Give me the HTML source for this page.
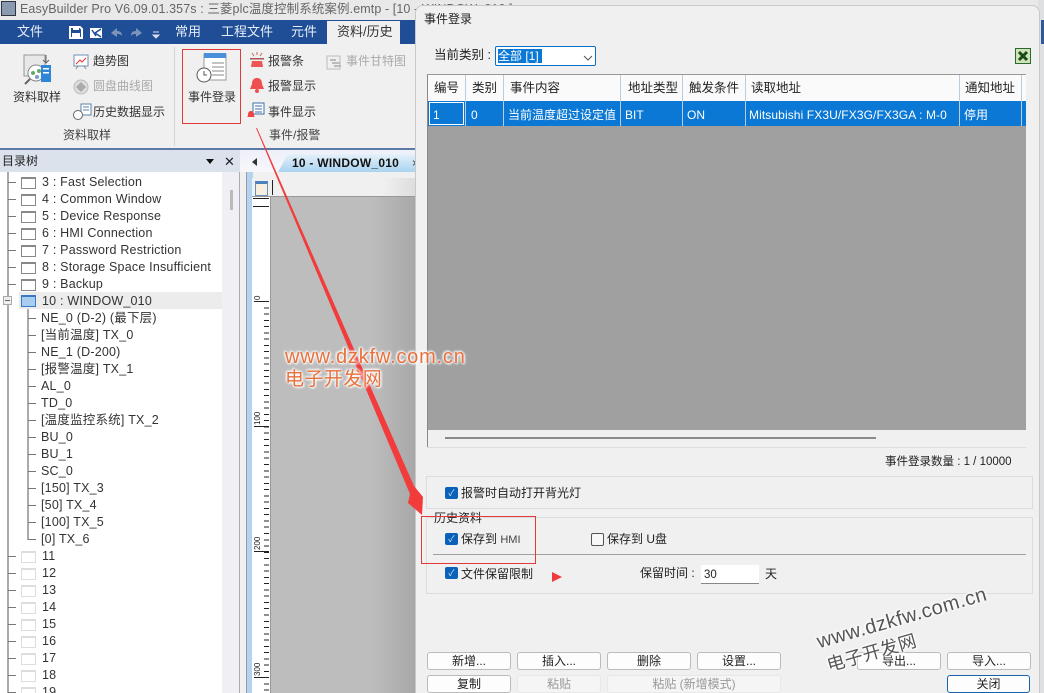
<!DOCTYPE html>
<html><head><meta charset="utf-8"><style>
html,body{margin:0;padding:0;width:1044px;height:693px;overflow:hidden}
body{position:relative;background:#f0f0f0;font-family:"Liberation Sans","Noto Sans CJK SC",sans-serif;font-size:12px;color:#222}
div,span{position:absolute;white-space:nowrap}
svg{position:absolute;left:0;top:0}
.m{color:#e8eef8;font-size:13px;top:24px;line-height:16px}
.r{font-size:12px;color:#333;line-height:14px}
.t{font-size:12.5px;letter-spacing:.2px;color:#333;left:42px;line-height:14px}
.s{left:41px}
.w{left:21px;width:13px;height:9px;border:1px solid #888;border-top-width:2px;background:#fff}
.e{left:21px;width:13px;height:9px;border:1px solid #ddd;border-top-width:2px;background:#fff}
.d{left:8px;width:8px;height:1px;background:#777}
.ds{left:28px;width:8px;height:1px;background:#777}
.h{top:81px;font-size:12.5px;color:#222;line-height:14px}
.c{top:108px;font-size:12px;color:#fff;line-height:14px}
.v{top:75px;width:1px;height:51px;background:#bcd}
.b{height:16px;line-height:16px;width:82px;border:1px solid #bbb;border-radius:3px;background:#fdfdfd;text-align:center;font-size:12px;color:#222}
.b.x{background:#f5f5f5;border-color:#e8e8e8;color:#999}
.k{width:13px;height:12px;background:#0a62b8;border-radius:2px;color:#cfe4fa;font-size:9px;line-height:12px;text-align:center}
.l{font-size:12px;line-height:14px}
.big{left:254px;width:15px;height:1px;background:#222}
.n{left:253px;font-size:8px;transform:rotate(-90deg);transform-origin:0 0;color:#222}
</style></head><body>
<div style="left:0;top:0;width:1044px;height:20px;background:#e9e9e9"></div>
<div style="left:1px;top:1px;width:13px;height:13px;background:#8a9ab0;border:1px solid #334"></div>
<div style="left:20px;top:2px;font-size:12.5px;line-height:14px;color:#666;letter-spacing:.1px">EasyBuilder Pro V6.09.01.357s : 三菱plc温度控制系统案例.emtp - [10 - WINDOW_010 ]</div>
<div style="left:0;top:20px;width:1044px;height:24px;background:#1f4e96"></div>
<div class="m" style="left:17px">文件</div>
<svg width="110" height="24" style="left:60px;top:20px"><path d="M10 7h10l2 2v9H10z" fill="none" stroke="#fff" stroke-width="2"/><rect x="13" y="7" width="6" height="3" fill="#fff"/><rect x="12" y="13" width="8" height="5" fill="#fff"/><rect x="30" y="8" width="12" height="10" fill="#fff"/><path d="M41 9l-6 4 6 4M32 10l4 6" stroke="#1f4e96" stroke-width="1.5" fill="none"/><path d="M51 13l6-5v3c4 0 5 2 5 5-1-2-3-2-5-2v3z" fill="#7d94b8"/><path d="M82 13l-6-5v3c-4 0-5 2-5 5 1-2 3-2 5-2v3z" fill="#7d94b8"/><path d="M93 12h6M93 15l3 3 3-3z" stroke="#dde" fill="#dde"/></svg>
<div class="m" style="left:175px">常用</div>
<div class="m" style="left:221px">工程文件</div>
<div class="m" style="left:291px">元件</div>
<div style="left:327px;top:21px;width:73px;height:23px;background:#f0f0f0"></div>
<div class="m" style="left:337px;color:#333">资料/历史</div>

<div style="left:0;top:44px;width:415px;height:104px;background:#f0f0f0"></div>
<div style="left:174px;top:47px;width:1px;height:99px;background:#d4d4d4"></div>
<div style="left:0;top:148px;width:415px;height:2px;background:#5c7aa8"></div>
<div style="left:0;top:150px;width:240px;height:22px;background:#dbe2ec"></div>
<div style="left:240px;top:150px;width:175px;height:22px;background:linear-gradient(#eef0fa,#f7f7fb)"></div>
<div style="left:2px;top:154px;font-size:12px;line-height:14px;color:#222">目录树</div>
<div style="left:206px;top:159px;border:4px solid transparent;border-top:5px solid #111;border-bottom:0"></div>
<div style="left:224px;top:155px;font-size:13px;color:#222;line-height:13px">✕</div>

<svg width="415" height="148" style="left:0;top:0">
<rect x="24" y="55" width="21" height="21" fill="#e8e8e8" stroke="#999"/><circle cx="36" cy="73" r="8" fill="#fff" stroke="#888"/><circle cx="33" cy="73" r="2" fill="#6a6"/><circle cx="39" cy="71" r="2" fill="#6a6"/><circle cx="37" cy="77" r="2" fill="#79c"/><line x1="30" y1="79" x2="25" y2="84" stroke="#666" stroke-width="2"/><rect x="41" y="65" width="10" height="17" fill="#2f86d6"/><rect x="43" y="68" width="6" height="1.5" fill="#fff"/><rect x="43" y="72" width="6" height="1.5" fill="#fff"/><path d="M46 55v7M43 60l3 3 3-3" stroke="#666" fill="none"/>
<rect x="74" y="55" width="14" height="11" fill="#fff" stroke="#6b8fb5"/><path d="M76 64l4-4 2 2 4-4" stroke="#e33" fill="none"/><path d="M78 66l-2 3M84 66l2 3" stroke="#888"/>
<circle cx="81" cy="87" r="7" fill="#ddd" stroke="#bbb"/><path d="M81 82l5 5-5 5-5-5z" fill="#aaa"/>
<rect x="81" y="104" width="10" height="11" fill="#fff" stroke="#5b7fa5"/><path d="M83 107h6M83 110h6" stroke="#5b7fa5"/><circle cx="78" cy="115" r="4.5" fill="#fff" stroke="#666"/>
<rect x="204" y="54" width="22" height="26" fill="#fff" stroke="#999"/><rect x="204" y="53" width="22" height="5" fill="#4a90d9"/><path d="M212 63h12M212 67h12M212 71h12M212 75h12" stroke="#888"/><circle cx="204" cy="75" r="7" fill="#fff" stroke="#555"/><path d="M204 71v4h3" stroke="#555" fill="none"/>
<path d="M252 61h10l1 6h-12z" fill="#e55"/><rect x="250" y="58" width="14" height="1.5" fill="#a55"/><path d="M252 53l2 3M262 53l-2 3M257 52v3" stroke="#c66"/>
<path d="M256 78c-4 0-5 3-5 6l-2 5h14l-2-5c0-3-1-6-5-6z" fill="#ee4f4f" transform="translate(1 0)"/><circle cx="257" cy="91" r="2" fill="#ee4f4f"/>
<rect x="253" y="103" width="11" height="11" fill="#fff" stroke="#3b6fa5"/><path d="M255 106h7M255 109h7M255 112h7" stroke="#3b6fa5"/><path d="M251 111c-3 0-3 3-3 5l-1 1h8l-1-1c0-2 0-5-3-5z" fill="#e44"/>
<rect x="327" y="56" width="13" height="13" fill="none" stroke="#bbb"/><rect x="330" y="59" width="6" height="2" fill="#bbb"/><rect x="332" y="62" width="8" height="2" fill="#bbb"/><rect x="334" y="65" width="7" height="2" fill="#bbb"/>
</svg>
<div class="r" style="left:13px;top:90px">资料取样</div>
<div class="r" style="left:93px;top:54px">趋势图</div>
<div class="r" style="left:93px;top:79px;color:#aaa">圆盘曲线图</div>
<div class="r" style="left:93px;top:105px">历史数据显示</div>
<div class="r" style="left:63px;top:128px;color:#444">资料取样</div>
<div class="r" style="left:188px;top:90px">事件登录</div>
<div class="r" style="left:268px;top:54px">报警条</div>
<div class="r" style="left:268px;top:79px">报警显示</div>
<div class="r" style="left:268px;top:105px">事件显示</div>
<div class="r" style="left:346px;top:54px;color:#aaa">事件甘特图</div>
<div class="r" style="left:269px;top:128px;color:#444">事件/报警</div>
<div style="left:182px;top:49px;width:57px;height:73px;border:1px solid #e23a3a"></div>

<!-- tab strip -->
<div style="left:252px;top:158px;border:4px solid transparent;border-right:5px solid #333;border-left:0"></div>
<div style="left:278px;top:154px;width:137px;height:18px;background:linear-gradient(#e6f1fa,#a9d3f0);clip-path:polygon(10px 0,100% 0,100% 100%,0 100%)"></div>
<div style="left:292px;top:156px;font-size:12px;line-height:14px;font-weight:bold;color:#111;letter-spacing:.25px">10 - WINDOW_010</div>
<div style="left:412px;top:156px;font-size:12px;color:#333">×</div>

<!-- tree -->
<div style="left:0;top:172px;width:222px;height:521px;background:#fff"></div>
<div style="left:222px;top:172px;width:17px;height:521px;background:#f0f0f4"></div>
<div style="left:230px;top:190px;width:3px;height:20px;background:#bbb"></div>
<div style="left:239px;top:172px;width:1px;height:521px;background:#aab"></div>
<div style="left:246px;top:172px;width:6px;height:521px;background:#b3d3ef;border-left:1px solid #99a"></div>
<div style="left:252px;top:178px;width:163px;height:18px;background:linear-gradient(90deg,#f0f0f0,#f0f0f0 80%,#ddd)"></div>
<div style="left:252px;top:196px;width:18px;height:497px;background:#fff;border-right:1px solid #999"></div>
<div style="left:252px;top:196px;width:163px;height:1px;background:#999"></div>
<div style="left:271px;top:197px;width:144px;height:496px;background:linear-gradient(90deg,#bdbdbd,#bdbdbd 70%,#a8a8a8)"></div>
<div style="left:255px;top:181px;width:11px;height:11px;background:#f6efe0;border:1px solid #6a90c0;border-top:3px solid #4a80c0"></div>
<div style="left:272px;top:180px;width:1px;height:15px;background:#222"></div>
<div style="left:253px;top:198px;width:16px;height:1px;background:#222"></div>
<div style="left:253px;top:206px;width:16px;height:1px;background:#222"></div>
<div style="left:264px;top:301px;width:5px;height:392px;background:repeating-linear-gradient(#222 0,#222 1px,transparent 1px,transparent 6.27px)"></div>
<div class="big" style="top:301px"></div><div class="big" style="top:426px"></div><div class="big" style="top:551px"></div><div class="big" style="top:677px"></div>
<div class="n" style="top:300px">0</div><div class="n" style="top:425px">100</div><div class="n" style="top:550px">200</div><div class="n" style="top:676px">300</div>

<div style="left:7px;top:172px;width:2px;height:521px;background:#aaa"></div>
<div style="left:27px;top:308px;width:2px;height:232px;background:#aaa"></div>
<div style="left:19px;top:292px;width:203px;height:17px;background:#ececec"></div>
<div style="left:3px;top:296px;width:7px;height:7px;border:1px solid #aaa;background:#eee"></div>
<div style="left:5px;top:300px;width:5px;height:1px;background:#666"></div>

<div class="d" style="top:182px"></div><div class="w" style="top:177px"></div><div class="t" style="top:175px">3 : Fast Selection</div>
<div class="d" style="top:199px"></div><div class="w" style="top:194px"></div><div class="t" style="top:192px">4 : Common Window</div>
<div class="d" style="top:216px"></div><div class="w" style="top:211px"></div><div class="t" style="top:209px">5 : Device Response</div>
<div class="d" style="top:233px"></div><div class="w" style="top:228px"></div><div class="t" style="top:226px">6 : HMI Connection</div>
<div class="d" style="top:250px"></div><div class="w" style="top:245px"></div><div class="t" style="top:243px">7 : Password Restriction</div>
<div class="d" style="top:267px"></div><div class="w" style="top:262px"></div><div class="t" style="top:260px">8 : Storage Space Insufficient</div>
<div class="d" style="top:284px"></div><div class="w" style="top:279px"></div><div class="t" style="top:277px">9 : Backup</div>
<div class="w" style="top:295px;border-color:#3a78c0;background:#a9cdf0"></div><div class="t" style="top:294px">10 : WINDOW_010</div>
<div class="ds" style="top:318px"></div><div class="t s" style="top:311px">NE_0 (D-2) (最下层)</div>
<div class="ds" style="top:335px"></div><div class="t s" style="top:328px">[当前温度] TX_0</div>
<div class="ds" style="top:352px"></div><div class="t s" style="top:345px">NE_1 (D-200)</div>
<div class="ds" style="top:369px"></div><div class="t s" style="top:362px">[报警温度] TX_1</div>
<div class="ds" style="top:386px"></div><div class="t s" style="top:379px">AL_0</div>
<div class="ds" style="top:403px"></div><div class="t s" style="top:396px">TD_0</div>
<div class="ds" style="top:420px"></div><div class="t s" style="top:413px">[温度监控系统] TX_2</div>
<div class="ds" style="top:437px"></div><div class="t s" style="top:430px">BU_0</div>
<div class="ds" style="top:454px"></div><div class="t s" style="top:447px">BU_1</div>
<div class="ds" style="top:471px"></div><div class="t s" style="top:464px">SC_0</div>
<div class="ds" style="top:488px"></div><div class="t s" style="top:481px">[150] TX_3</div>
<div class="ds" style="top:505px"></div><div class="t s" style="top:498px">[50] TX_4</div>
<div class="ds" style="top:522px"></div><div class="t s" style="top:515px">[100] TX_5</div>
<div class="ds" style="top:539px"></div><div class="t s" style="top:532px">[0] TX_6</div>
<div class="d" style="top:556px"></div><div class="e" style="top:551px"></div><div class="t" style="top:549px">11</div>
<div class="d" style="top:573px"></div><div class="e" style="top:568px"></div><div class="t" style="top:566px">12</div>
<div class="d" style="top:590px"></div><div class="e" style="top:585px"></div><div class="t" style="top:583px">13</div>
<div class="d" style="top:607px"></div><div class="e" style="top:602px"></div><div class="t" style="top:600px">14</div>
<div class="d" style="top:624px"></div><div class="e" style="top:619px"></div><div class="t" style="top:617px">15</div>
<div class="d" style="top:641px"></div><div class="e" style="top:636px"></div><div class="t" style="top:634px">16</div>
<div class="d" style="top:658px"></div><div class="e" style="top:653px"></div><div class="t" style="top:651px">17</div>
<div class="d" style="top:675px"></div><div class="e" style="top:670px"></div><div class="t" style="top:668px">18</div>
<div class="d" style="top:692px"></div><div class="e" style="top:687px"></div><div class="t" style="top:685px">19</div>

<!-- right backdrop -->
<div style="left:1038px;top:0;width:6px;height:693px;background:#dfe0e2"></div>
<div style="left:1041px;top:20px;width:3px;height:24px;background:#2f5a9a"></div>

<!-- dialog -->
<div style="left:415px;top:5px;width:625px;height:690px;background:#f0f0f1;border:1px solid #c8c8c8;border-radius:8px 8px 0 0;box-sizing:border-box"></div>
<div style="left:424px;top:12px;font-size:12px;line-height:14px;color:#222">事件登录</div>
<div style="left:434px;top:48px;font-size:12.5px;line-height:14px;color:#222">当前类别 :</div>
<div style="left:495px;top:46px;width:101px;height:20px;background:#fff;border:1px solid #0a70c8;border-radius:2px;box-sizing:border-box"></div>
<div style="left:498px;top:49px;width:44px;height:14px;background:#0a78d4;color:#fff;font-size:12px;line-height:14px">全部 [1]</div>
<svg width="10" height="6" style="left:583px;top:55px"><path d="M1 1l4 4 4-4" fill="none" stroke="#555"/></svg>
<svg width="17" height="17" style="left:1015px;top:48px"><rect x="0.5" y="0.5" width="15" height="15" fill="#cfe3b8" stroke="#2a6a2a"/><path d="M4 4l8 8M12 4l-8 8" stroke="#1a4a1a" stroke-width="3"/></svg>

<div style="left:427px;top:74px;width:599px;height:373px;background:#a0a0a0;border-left:1px solid #888;box-sizing:border-box"></div>
<div style="left:428px;top:75px;width:598px;height:26px;background:#fafafa"></div>
<div style="left:428px;top:101px;width:598px;height:25px;background:#0a78d4"></div>
<div style="left:427px;top:74px;width:599px;height:1px;background:#999"></div>
<div style="left:429px;top:102px;width:35px;height:23px;border:1px solid #fff;box-sizing:border-box"></div>
<div class="v" style="left:465px"></div><div class="v" style="left:503px"></div><div class="v" style="left:620px"></div><div class="v" style="left:682px"></div><div class="v" style="left:745px"></div><div class="v" style="left:959px"></div><div class="v" style="left:1021px"></div>
<div class="h" style="left:434px">编号</div><div class="h" style="left:472px">类别</div><div class="h" style="left:510px">事件内容</div><div class="h" style="left:628px">地址类型</div><div class="h" style="left:689px">触发条件</div><div class="h" style="left:751px">读取地址</div><div class="h" style="left:965px">通知地址</div>
<div class="c" style="left:433px">1</div><div class="c" style="left:471px">0</div><div class="c" style="left:508px">当前温度超过设定值</div><div class="c" style="left:625px">BIT</div><div class="c" style="left:687px">ON</div><div class="c" style="left:749px;letter-spacing:.1px">Mitsubishi FX3U/FX3G/FX3GA : M-0</div><div class="c" style="left:964px">停用</div>
<div style="left:428px;top:430px;width:598px;height:17px;background:#f0f0f1"></div>
<div style="left:445px;top:437px;width:431px;height:2px;background:#8a8a8a"></div>
<div style="left:427px;top:447px;width:599px;height:1px;background:#ddd"></div>

<div style="left:885px;top:455px;font-size:11.5px;line-height:14px;color:#222">事件登录数量 : 1 / 10000</div>
<div style="left:426px;top:476px;width:605px;height:31px;border:1px solid #dcdcdc"></div>
<div class="k" style="left:445px;top:487px">✓</div>
<div class="l" style="left:461px;top:486px">报警时自动打开背光灯</div>
<div style="left:426px;top:517px;width:605px;height:75px;border:1px solid #dcdcdc"></div>
<div class="l" style="left:434px;top:511px;background:#f0f0f1;padding-right:1px">历史资料</div>
<div class="k" style="left:445px;top:533px">✓</div>
<div class="l" style="left:461px;top:532px">保存到 <span style="position:static;font-size:11px;color:#444">HMI</span></div>
<div style="left:591px;top:533px;width:11px;height:11px;border:1px solid #555;border-radius:2px;background:#f8f8f8"></div>
<div class="l" style="left:607px;top:532px">保存到 U盘</div>
<div style="left:433px;top:554px;width:593px;height:1px;background:#a0a0a0"></div>
<div class="k" style="left:445px;top:567px">✓</div>
<div class="l" style="left:461px;top:567px">文件保留限制</div>
<div class="l" style="left:640px;top:566px">保留时间 :</div>
<div style="left:701px;top:565px;width:58px;height:18px;background:#fff;border-bottom:1px solid #888"></div>
<div class="l" style="left:704px;top:568px;font-size:11.5px">30</div>
<div class="l" style="left:765px;top:567px">天</div>
<div style="left:421px;top:516px;width:113px;height:46px;border:1px solid #e23a3a"></div>
<svg width="12" height="12" style="left:552px;top:571px"><path d="M0 1l10 5-10 5z" fill="#ee3b3b"/></svg>

<div class="b" style="left:427px;top:652px">新增...</div>
<div class="b" style="left:517px;top:652px">插入...</div>
<div class="b" style="left:607px;top:652px">删除</div>
<div class="b" style="left:697px;top:652px">设置...</div>
<div class="b" style="left:857px;top:652px">导出...</div>
<div class="b" style="left:947px;top:652px">导入...</div>
<div class="b" style="left:427px;top:675px">复制</div>
<div class="b x" style="left:517px;top:675px">粘贴</div>
<div class="b x" style="left:607px;top:675px;width:172px">粘贴 (新增模式)</div>
<div class="b" style="left:947px;top:675px;border:1.5px solid #1a62a8;width:81px">关闭</div>

<!-- arrow -->
<svg width="1044" height="693" style="left:0;top:0;z-index:5"><path d="M256 128L257 128L414 486L423 497L422 515L408 503L410 494Z" fill="#f23c3c"/></svg>

<!-- watermarks -->
<div style="left:285px;top:346px;font-size:20px;line-height:22px;color:#e8703c;z-index:6;text-shadow:0 0 2px #fff,0 0 3px #fff,1px 1px 2px #fff,-1px -1px 2px #fff;letter-spacing:.8px">www.dzkfw.com.cn<br><span style="position:static;font-size:19px;letter-spacing:.45px">电子开发网</span></div>
<div style="left:828px;top:629px;font-size:20px;line-height:25px;color:#555;z-index:6;transform:rotate(-16deg);transform-origin:0 100%;text-shadow:0 0 2px #fff,0 0 3px #fff,1px 1px 2px #fff,-1px -1px 2px #fff;letter-spacing:.5px">www.dzkfw.com.cn<br><span style="position:static;font-size:18px;margin-left:3px">电子开发网</span></div>
</body></html>
